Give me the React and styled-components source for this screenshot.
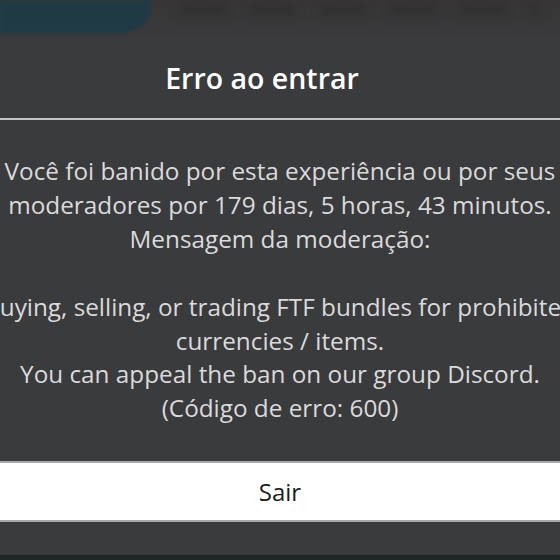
import styled, { createGlobalStyle } from "styled-components";

const Global = createGlobalStyle`
  html, body {
    margin: 0;
    padding: 0;
    background: #3a3b3d;
    overflow: hidden;
  }
  * { box-sizing: border-box; }
`;

function App() {
  const lines = [
    "Você foi banido por esta experiência ou por seus",
    "moderadores por 179 dias, 5 horas, 43 minutos.",
    "Mensagem da moderação:",
    "",
    "Buying, selling, or trading FTF bundles for prohibited",
    "currencies / items.",
    "You can appeal the ban on our group Discord.",
    "(Código de erro: 600)",
  ];
  return (
    <Screen>
      <Global />
      <Backdrop>
        <TealPatch />
        <BlurText />
      </Backdrop>
      <Dialog>
        <Title>Erro ao entrar</Title>
        <Divider />
        <Message>
          {lines.map((line, i) => (
            <Line key={i}>{line || "\u00a0"}</Line>
          ))}
        </Message>
        <ExitButton>Sair</ExitButton>
      </Dialog>
      <Footer />
    </Screen>
  );
}

export default App;

const Screen = styled.div`
  width: 560px;
  height: 560px;
  display: flex;
  flex-direction: column;
  overflow: hidden;
  background: #3a3b3d;
  font-family: "Open Sans", "Liberation Sans", sans-serif;
`;

const Backdrop = styled.div`
  height: 38px;
  display: flex;
  background: linear-gradient(to bottom, #373536 0%, #3a3a3c 100%);
`;

const TealPatch = styled.div`
  width: 150px;
  height: 33px;
  background: #203a45;
  border-bottom-right-radius: 30px 24px;
  filter: blur(1.5px);
`;

const BlurText = styled.div`
  flex: 1;
  margin: 4px 20px 20px 30px;
  background: repeating-linear-gradient(
    to right,
    rgba(25, 25, 27, 0.18) 0 46px,
    rgba(58, 56, 58, 0) 46px 70px
  );
  filter: blur(5px);
`;

const Dialog = styled.div`
  display: flex;
  flex-direction: column;
  align-items: center;
`;

const Title = styled.h1`
  margin: 0;
  width: 100%;
  height: 80px;
  padding-right: 36px;
  display: flex;
  align-items: center;
  justify-content: center;
  color: #ffffff;
  font-size: 28.5px;
  font-weight: 600;
`;

const Divider = styled.div`
  width: 100%;
  height: 2px;
  background: #c4c4c4;
`;

const Message = styled.div`
  width: 660px;
  margin-top: 34px;
  display: flex;
  flex-direction: column;
  align-items: center;
  color: #dadada;
  font-size: 24.3px;
  line-height: 33.9px;
`;

const Line = styled.div`
  white-space: nowrap;
`;

const ExitButton = styled.button`
  margin-top: 36px;
  width: 100%;
  height: 61px;
  border: none;
  border-top: 2px solid #a9a9a9;
  border-bottom: 2px solid #a9a9a9;
  background: #ffffff;
  color: #1b1b1b;
  font-family: "Open Sans", "Liberation Sans", sans-serif;
  font-size: 24px;
  cursor: pointer;
`;

const Footer = styled.div`
  flex: 1;
  background: linear-gradient(to bottom, #3a3b3d 0, #3a3b3d 33px, #1f2426 33px);
`;
